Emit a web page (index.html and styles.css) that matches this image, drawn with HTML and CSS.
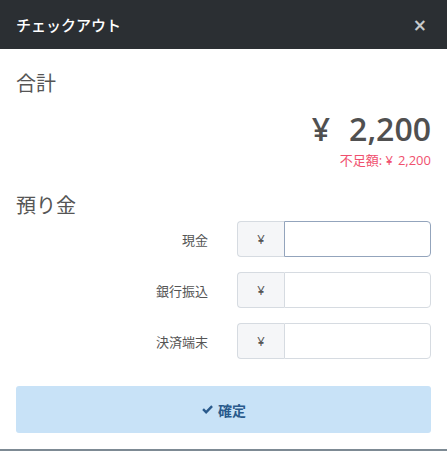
FILE: index.html
```html
<!DOCTYPE html>
<html lang="ja">
<head>
<meta charset="utf-8">
<link rel="stylesheet" href="styles.css">
</head>
<body>
<div class="modal">
  <div class="modal-header">
    <span class="title">チェックアウト</span>
    <span class="close">&times;</span>
  </div>
  <div class="modal-body">
    <h2 class="section">合計</h2>
    <div class="total"><span class="yen">¥</span>2,200</div>
    <div class="shortage">不足額: <span class="yen-s">¥</span>2,200</div>
    <h2 class="section deposit">預り金</h2>
    <div class="form">
      <label class="label">現金</label>
      <div class="group focus"><span class="addon">¥</span><input class="input" type="text"></div>
      <label class="label">銀行振込</label>
      <div class="group"><span class="addon">¥</span><input class="input" type="text"></div>
      <label class="label">決済端末</label>
      <div class="group"><span class="addon">¥</span><input class="input" type="text"></div>
    </div>
    <button class="confirm" type="button">
      <svg class="check" viewBox="0 0 16 16" width="13" height="13"><path d="M1.5 8.6 L3.6 6.5 L6.3 9.2 L12.6 2.9 L14.7 5 L6.3 13.4 Z" fill="currentColor"/></svg>
      <span>確定</span>
    </button>
  </div>
</div>
</body>
</html>
```

FILE: styles.css
```css
* { box-sizing: border-box; }
html, body { margin: 0; padding: 0; }
body {
  background: #7d8a94;
  font-family: "Open Sans", "Noto Sans CJK JP", sans-serif;
  color: #555;
  width: 447px;
  height: 451px;
  overflow: hidden;
}
.modal {
  background: #fff;
  height: 449px;
  display: flex;
  flex-direction: column;
}
.modal-header {
  background: #2b2f33;
  height: 49px;
  display: flex;
  align-items: center;
  justify-content: space-between;
  padding: 0 20px 0 16px;
}
.title {
  color: #fff;
  font-family: "Noto Sans CJK JP", sans-serif;
  font-size: 15px;
  font-weight: 500;
}
.close {
  color: #c8cacc;
  font-family: "DejaVu Sans", sans-serif;
  font-size: 17px;
  font-weight: 700;
}
.modal-body {
  padding: 20px 16px 0 16px;
  display: flex;
  flex-direction: column;
}
.section {
  margin: 0;
  font-family: "Noto Sans CJK JP", sans-serif;
  font-size: 20px;
  font-weight: 400;
  line-height: 28px;
  color: #555;
}
.total {
  text-align: right;
  font-size: 32px;
  font-weight: 600;
  line-height: 40px;
  margin-top: 12px;
  color: #505050;
}
.yen { margin-right: 19px; }
.shortage {
  text-align: right;
  font-size: 13px;
  line-height: 18px;
  color: #f0506e;
  font-family: "Open Sans", "Noto Sans CJK JP", sans-serif;
  margin-top: 2px;
}
.yen-s { margin-right: 5px; }
.deposit { margin-top: 22px; }
.form {
  display: grid;
  grid-template-columns: 192px minmax(0, 1fr);
  column-gap: 29px;
  row-gap: 15px;
  margin-top: 2px;
  align-items: center;
}
.label {
  text-align: right;
  font-family: "Noto Sans CJK JP", sans-serif;
  font-size: 13px;
  color: #555;
}
.group {
  display: flex;
  height: 36px;
  width: 100%;
  min-width: 0;
}
.addon {
  flex: 0 0 47px;
  background: #f5f6f8;
  border: 1px solid #d6dbe1;
  border-right: none;
  border-radius: 4px 0 0 4px;
  display: flex;
  align-items: center;
  justify-content: center;
  font-size: 13px;
  color: #555;
}
.input {
  flex: 1 1 0;
  width: 0;
  min-width: 0;
  border: 1px solid #d6dbe1;
  border-radius: 0 4px 4px 0;
  background: #fff;
  outline: none;
  padding: 0 8px;
  font-size: 13px;
}
.group.focus .input { border-color: #93a4bc; }
.confirm {
  margin-top: 27px;
  height: 47px;
  width: 100%;
  border: none;
  border-radius: 3px;
  background: #c8e2f7;
  color: #2a5a8c;
  font-family: "Noto Sans CJK JP", sans-serif;
  font-size: 14px;
  font-weight: 700;
  display: flex;
  align-items: center;
  justify-content: center;
  gap: 4px;
}
.check { display: block; }
```
